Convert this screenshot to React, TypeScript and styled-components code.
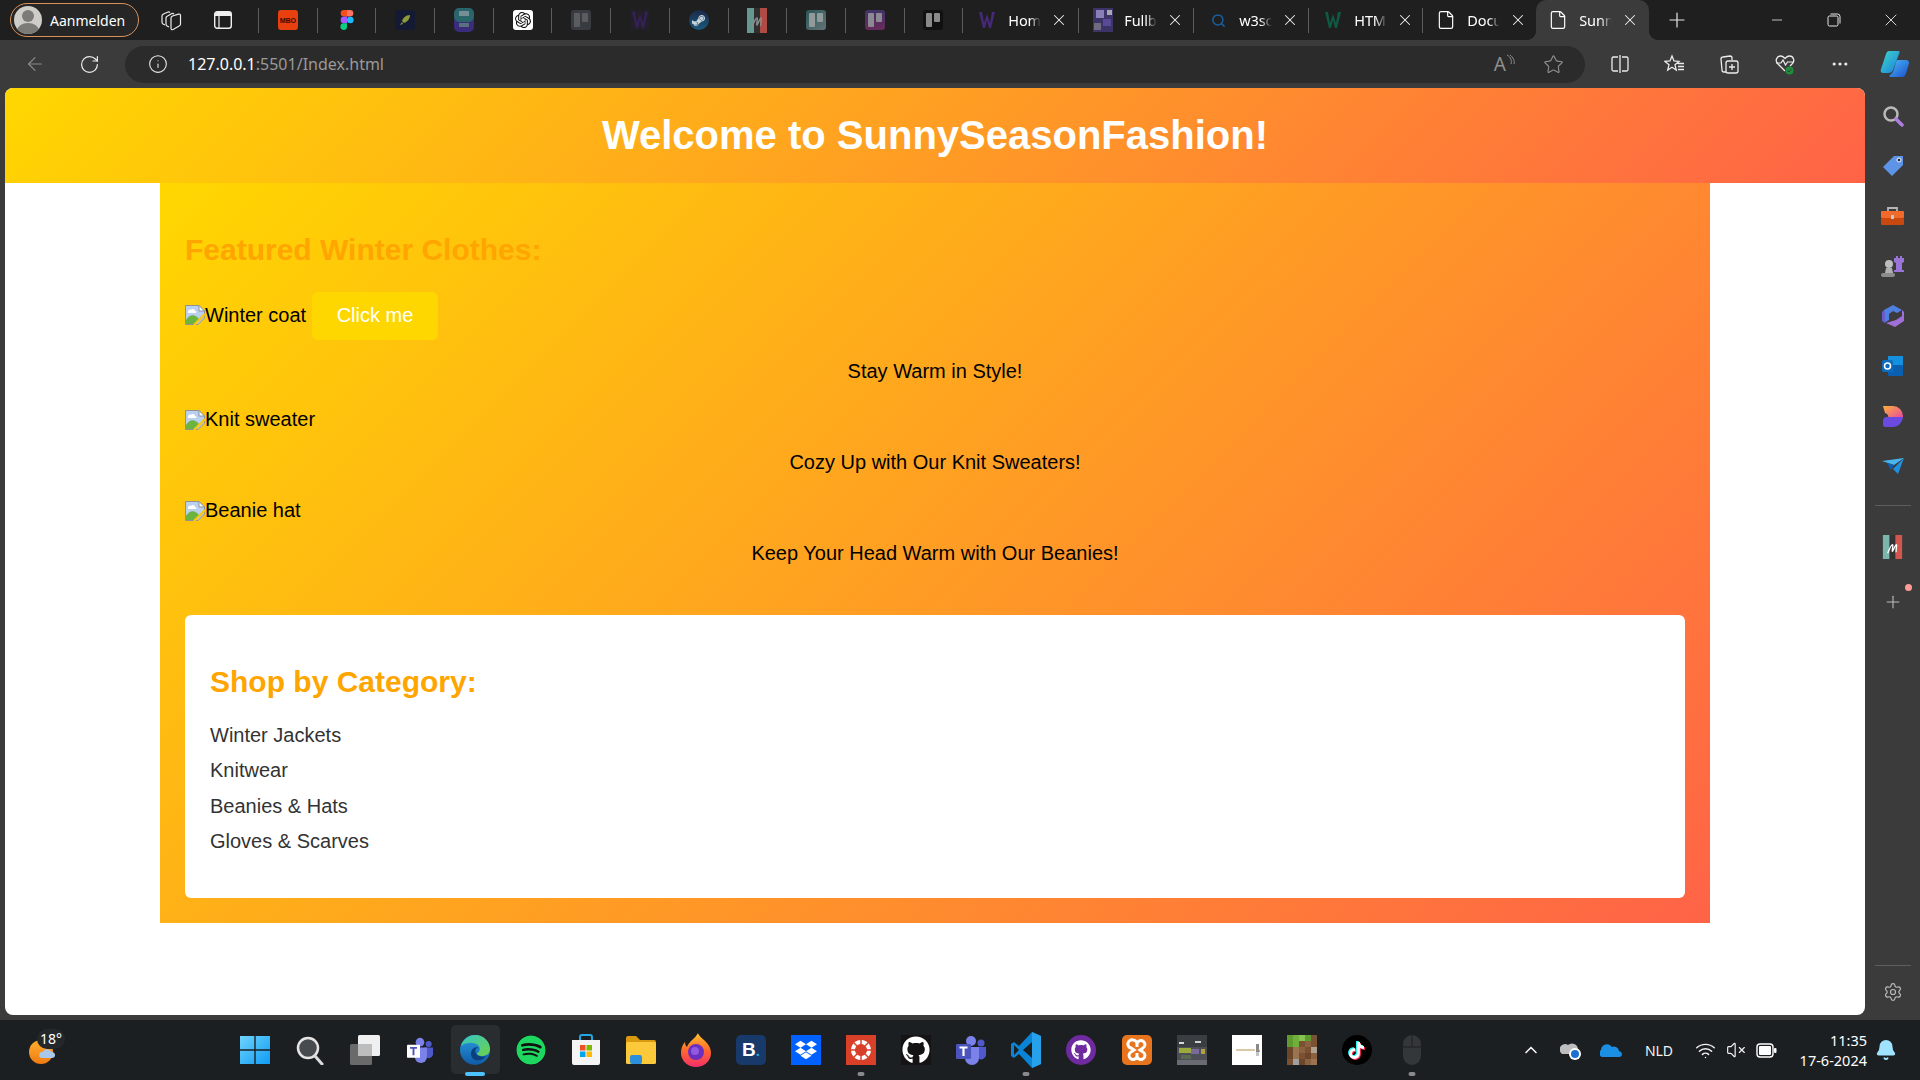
import React from "react";
import styled, { createGlobalStyle } from "styled-components";
import {
  ArrowLeft, RotateCw, Info, Star, X, Plus, Minus, Ellipsis, Settings, ChevronUp, VolumeX, Wifi, Bell, File, Search,
} from "lucide-react";
import { FaSteamSymbol, FaGithub, FaDropbox, FaSpotify, FaTiktok } from "react-icons/fa";
import { SiOpenai } from "react-icons/si";

const Global = createGlobalStyle`
  html, body { margin: 0; padding: 0; background: #1c1f22; }
  * { box-sizing: border-box; }
  body { font-family: "Liberation Sans", Arial, sans-serif; overflow: hidden; }
`;

const Shell = styled.div`
  width: 1920px; height: 1080px; display: flex; flex-direction: column; overflow: hidden; background: #3b3b3b;
`;

/* ---------- tab strip ---------- */
const TabStrip = styled.div`
  height: 40px; flex: none; display: flex; align-items: center; background: #1f1f1f; padding-left: 10px;
  color: #fff; font-family: "Noto Sans", sans-serif; font-size: 14.5px;
`;
const Profile = styled.div`
  width: 129px; height: 34px; flex: none; display: flex; align-items: center; gap: 8px; padding-left: 3px;
  border: 1px solid #d9915a; border-radius: 17px; background: #262626;
`;
const Avatar = styled.span`
  width: 28px; height: 28px; border-radius: 50%; background: #cfcdc8; overflow: hidden; display: block; flex: none;
`;
const Name = styled.span`font-size: 14px; color: #fff;`;
const StripSlot = styled.div<{ $w: number }>`
  width: ${p => p.$w}px; height: 40px; flex: none; display: flex; align-items: center; justify-content: center; color: #e8e8e8;
`;
const Sep = styled.div`
  width: 1px; height: 25px; flex: none; background: #5c5c5c;
`;
const PinnedTab = styled.div`
  width: 57.7px; height: 40px; flex: none; display: flex; align-items: center; justify-content: center;
`;
const Tab = styled.div<{ $w: number; $pad?: number; $active?: boolean }>`
  position: relative; width: ${p => p.$w}px; height: 40px; flex: none; display: flex; align-items: center; padding-left: ${p => p.$pad ?? 14}px;
  background: ${p => (p.$active ? "#3b3b3b" : "transparent")};
  border-radius: ${p => (p.$active ? "10px 10px 0 0" : "0")};
  ${p => p.$active && `
    &::before, &::after { content: ""; position: absolute; bottom: 0; width: 10px; height: 10px; }
    &::before { left: -10px; background: radial-gradient(circle at 0 0, transparent 10px, #3b3b3b 10.5px); }
    &::after { right: -10px; background: radial-gradient(circle at 100% 0, transparent 10px, #3b3b3b 10.5px); }
  `}
`;
const FaviconBox = styled.span`
  width: 20px; height: 24px; flex: none; display: flex; align-items: center; justify-content: center;
`;
const TabTitle = styled.span`
  width: 33px; margin-left: 11px; overflow: hidden; white-space: nowrap; flex: none; letter-spacing: -0.1px;
  -webkit-mask-image: linear-gradient(90deg, #000 65%, transparent 100%);
  mask-image: linear-gradient(90deg, #000 65%, transparent 100%);
`;
const TabClose = styled.span`
  display: flex; margin-left: 9px; color: #f0f0f0;
`;
const Spacer = styled.div`flex: 1;`;
const MiniMark = styled.span<{ $bg: string; $color?: string; $fade?: number; $round?: boolean }>`
  width: 20px; height: 20px; border-radius: ${p => (p.$round ? "50%" : "3px")}; display: flex; align-items: center; justify-content: center; flex: none;
  background: ${p => p.$bg}; color: ${p => p.$color || "#fff"}; opacity: ${p => p.$fade ?? 1}; overflow: hidden;
`;
const Dimmed = styled.span<{ $fade: number }>`
  display: flex; opacity: ${p => p.$fade};
`;
const MboText = styled.span`
  font: 700 7px "Liberation Sans", sans-serif; color: #3a0c00; letter-spacing: 0;
`;
const TrelloBars = styled.span<{ $c: string }>`
  display: flex; gap: 2px; align-items: flex-start;
  &::before, &::after { content: ""; width: 6px; background: ${p => p.$c}; border-radius: 1px; }
  &::before { height: 14px; }
  &::after { height: 9px; }
`;

/* ---------- toolbar ---------- */
const Toolbar = styled.div`
  height: 48px; flex: none; display: flex; align-items: center; background: #3b3b3b; padding-left: 8px; color: #e6e6e6;
`;
const ToolSlot = styled.div<{ $w?: number; $dim?: boolean }>`
  width: ${p => p.$w ?? 55}px; height: 38px; flex: none; display: flex; align-items: center; justify-content: center;
  color: ${p => (p.$dim ? "#8a8a8a" : "#ececec")};
`;
const AddressBar = styled.div`
  width: 1460px; height: 37px; flex: none; margin: 0 7px 0 8px; display: flex; align-items: center;
  background: #2b2b2b; border-radius: 19px; padding: 0 21px 0 23px;
  font-family: "Noto Sans", sans-serif; font-size: 16px;
`;
const UrlHost = styled.span`color: #fff; margin-left: 20px;`;
const UrlRest = styled.span`color: #9a9a9a;`;
const AddressIcons = styled.div`
  margin-left: auto; display: flex; align-items: center; gap: 28px; color: #8f8f8f;
`;
const ReadAloud = styled.span`
  font: 400 19px "Noto Sans", sans-serif; color: #8f8f8f; display: inline-flex; align-items: flex-start; line-height: 20px;
`;

/* ---------- main ---------- */
const Main = styled.div`
  flex: 1; min-height: 0; display: flex; background: #3b3b3b;
`;
const Page = styled.main`
  width: 1860px; margin: 0 0 5px 5px; background: #fff; border-radius: 8px; overflow: hidden; color: #000; font-size: 20px; line-height: 23px;
`;
const Hero = styled.header`
  height: 95px; padding-bottom: 1px; display: flex; align-items: center; justify-content: center;
  background: linear-gradient(135deg, #ffd700, #ff6347);
`;
const HeroTitle = styled.h1`
  margin: 0; color: #fff; font-size: 40px; line-height: 46px; font-weight: 700;
`;
const Container = styled.div`
  width: 1550px; margin: 0 auto; padding: 25px; background: linear-gradient(135deg, #ffd700, #ff6347);
`;
const SectionTitle = styled.h2`
  margin: 25px 0; font-size: 30px; line-height: 34px; font-weight: 700; color: #ffa500;
`;
const Product = styled.article`
  margin: 25px 0;
`;
const ProductLine = styled.div`
  display: flex; align-items: center; gap: 5.5px;
`;
const Missing = styled.span<{ $lift?: boolean }>`
  display: inline-flex; align-items: center; margin-bottom: ${p => (p.$lift ? 2 : 0)}px;
`;
const Cta = styled.button`
  height: 48px; padding: 0 25px 2px; border: 0; border-radius: 6px; background: #ffd700; color: #fff;
  font: 400 20px "Liberation Sans", Arial, sans-serif;
`;
const Caption = styled.p`
  margin: 20px 0; text-align: center;
`;
const Categories = styled.section`
  margin-top: 50px; padding: 25px; background: #fff; border-radius: 6px;
`;
const CategoryList = styled.ul`
  list-style: none; margin: -0.5px 0 19.5px; padding: 0; color: #333;
`;
const Category = styled.li`
  margin-bottom: 12.5px;
`;

/* ---------- sidebar ---------- */
const Sidebar = styled.aside`
  width: 55px; flex: none; display: flex; flex-direction: column; align-items: center; padding: 3px 0 3px; color: #bdbdbd;
`;
const SideSlot = styled.div<{ $h?: number }>`
  position: relative; width: 55px; height: ${p => p.$h ?? 50}px; flex: none; display: flex; align-items: center; justify-content: center;
`;
const SideRule = styled.div<{ $t: number; $b: number }>`
  width: 36px; height: 1px; flex: none; background: #5e5e5e; margin: ${p => p.$t}px 0 ${p => p.$b}px;
`;
const RedDot = styled.span`
  position: absolute; right: 8px; top: 12px; width: 7px; height: 7px; border-radius: 50%; background: #ff9c94;
`;

/* ---------- taskbar ---------- */
const Taskbar = styled.footer`
  height: 60px; flex: none; display: flex; align-items: center; background: #1c1f22; color: #fff;
  font-family: "Noto Sans", sans-serif;
`;
const WeatherArea = styled.div`
  width: 227.5px; height: 60px; flex: none; padding-left: 29px; display: flex; align-items: center;
`;
const WeatherIcon = styled.div`
  position: relative; width: 26px; height: 26px; margin-top: 3px;
`;
const TempBadge = styled.span`
  position: absolute; left: 8px; top: -10px; width: 28px; height: 20px; border-radius: 10px; background: #25282b;
  font-size: 14px; line-height: 19px; text-align: center; color: #fff;
`;
const TaskIcon = styled.div<{ $active?: boolean }>`
  position: relative; width: 55.1px; height: 60px; flex: none; display: flex; align-items: center; justify-content: center;
  ${p => p.$active && `
    &::before { content: ""; position: absolute; left: 3px; right: 3px; top: 5px; bottom: 6px; border-radius: 5px; background: #2a2d30; }
    & > * { position: relative; }
  `}
`;
const RunDot = styled.span<{ $wide?: boolean }>`
  position: absolute !important; bottom: 4px; left: 50%; transform: translateX(-50%); height: 4px; border-radius: 2px;
  width: ${p => (p.$wide ? 20 : 7)}px; background: ${p => (p.$wide ? "#4cc2ff" : "#8a8a8a")};
`;
const Tile = styled.span<{ $bg: string; $r?: number; $c?: string }>`
  width: 30px; height: 30px; border-radius: ${p => p.$r ?? 0}px; background: ${p => p.$bg}; color: ${p => p.$c || "#fff"};
  display: flex; align-items: center; justify-content: center; overflow: hidden;
`;
const BookingLetter = styled.span`
  font: 700 19px "Liberation Sans", sans-serif; color: #fff;
  & > i { color: #21a6d8; font-style: normal; font-size: 15px; }
`;
const Tray = styled.div`
  margin-left: auto; width: 409px; height: 60px; flex: none; display: flex; align-items: center;
`;
const TraySlot = styled.div<{ $w: number }>`
  width: ${p => p.$w}px; height: 60px; flex: none; display: flex; align-items: center; justify-content: center; color: #f2f2f2; font-size: 14px;
`;
const Clock = styled.div`
  width: 84px; flex: none; text-align: right; font-size: 14.5px; line-height: 20px; color: #fff; white-space: nowrap;
`;

/* ---------- drawings ---------- */
const BrokenImage = () => (
  <svg width="20" height="20" viewBox="0 0 20 20" style={{ flex: "none" }}>
    <path d="M.5.5h13.500l5.500 5.500v7L13 19.500H.5z" fill="#b9d0ee" stroke="#8f9296" />
    <path d="M14 .5v5.500h5.500z" fill="#fff" stroke="#8f9296" />
    <path d="M3 7c0-2 2-3 3-2 1-2 4-1 4 1 2 0 2 2 0 2H4c-1 0-1.500-.5-1-1z" fill="#fff" />
    <path d="M1 19v-4c3-5 7-6 11-3l2 2-5 5z" fill="#6cb33f" />
    <path d="M9 20L20 9" stroke="#f7c815" strokeWidth="2.400" />
  </svg>
);
const Figma = () => (
  <svg width="20" height="20" viewBox="0 0 14 20">
    <path d="M4 0h3v6.600H4a3.300 3.300 0 010-6.600z" fill="#f24e1e" />
    <path d="M7 0h3a3.300 3.300 0 010 6.600H7z" fill="#ff7262" />
    <path d="M4 6.600h3v6.700H4a3.300 3.300 0 010-6.700z" fill="#a259ff" />
    <circle cx="10.300" cy="10" r="3.300" fill="#1abcfe" />
    <path d="M4 13.300h3v3.400a3.300 3.300 0 11-3-3.400z" fill="#0acf83" />
  </svg>
);
const WLogo = ({ c = "#5b2d91" }: { c?: string }) => (
  <svg width="16" height="18" viewBox="0 0 16 18"><path d="M0 1h3l2 11 3-9 3 9 2-11h3l-4 16h-2L8 9l-2 8H4z" fill={c} /></svg>
);
const Rocket = () => (
  <svg width="14" height="14" viewBox="0 0 14 14"><path d="M12 2C8 2 5 5 4 8l2 2c3-1 6-4 6-8zM4 9l-2 3 3-1z" fill="#8f9a3a" /></svg>
);
const Tool = () => (
  <svg width="20" height="24" viewBox="0 0 20 24">
    <rect y="8" width="20" height="16" rx="5" fill="#45309a" />
    <rect width="20" height="14" rx="5" fill="#2e7d86" />
    <rect x="5" y="3" width="10" height="5" fill="#8fb7bd" />
    <rect x="5" y="15" width="10" height="4" fill="#6d8aa0" />
  </svg>
);
const MLogo = ({ w = 20, h = 25, line = "#a8a8a8" }: { w?: number; h?: number; line?: string }) => (
  <svg width={w} height={h} viewBox="0 0 20 25">
    <rect width="7" height="25" fill="#7ab5ae" /><rect x="7" width="6" height="25" fill="#333" /><rect x="13" width="7" height="25" fill="#d2564e" />
    <path d="M5 19c2-5 4-9 5-9s-1 8 0 7 3-7 4-7-1 7 0 8" fill="none" stroke={line} strokeWidth="1.400" />
  </svg>
);
const Thumb = () => (
  <svg width="20" height="24" viewBox="0 0 20 24">
    <rect width="20" height="24" fill="#3c3466" /><rect x="3" y="2" width="8" height="8" fill="#8b7fb8" /><rect x="10" y="11" width="8" height="7" fill="#5a4a96" /><rect x="1" y="15" width="7" height="7" fill="#6f6a80" /><rect x="14" y="2" width="5" height="5" fill="#a8a5b5" />
  </svg>
);
const WorkspacesIcon = () => (
  <svg width="21" height="21" viewBox="0 0 21 21" fill="none" stroke="#ececec" strokeWidth="1.200">
    <path d="M4 15L2 14c-.8-.4-1-1-1-2V6c0-1 .5-1.500 1.500-2L7 2c1-.4 1.500 0 2 .6" />
    <path d="M8 17l-2-1c-.8-.4-1-1-1-2V8c0-1 .5-1.500 1.500-2L11 3.500c1-.4 1.500 0 2 .6" />
    <path d="M10 8c0-1 .5-1.500 1.500-2l6-1.800c1.200-.3 2 .2 2 1.400V14c0 1-.4 1.600-1.400 2l-6 3.500c-1.300.6-2.100 0-2.100-1.300z" />
  </svg>
);
const PanelIcon = () => (
  <svg width="18" height="18" viewBox="0 0 18 18" fill="none">
    <rect x=".7" y=".7" width="16.600" height="16.600" rx="2.500" stroke="#f0f0f0" strokeWidth="1.400" />
    <path d="M1 3a2 2 0 012-2h12a2 2 0 012 2v2H1z" fill="#f0f0f0" />
    <path d="M5 5v12.500" stroke="#f0f0f0" strokeWidth="1.200" />
  </svg>
);
const RestoreIcon = () => (
  <svg width="14" height="14" viewBox="0 0 14 14" fill="none" stroke="#e8e8e8">
    <rect x="1" y="3" width="10" height="10" rx="1.500" /><path d="M3.500 1h7A2.500 2.500 0 0113 3.500v7" />
  </svg>
);
const SplitIcon = () => (
  <svg width="20" height="20" viewBox="0 0 20 20" fill="none" stroke="#ececec" strokeWidth="1.300">
    <path d="M8 3H3.500A1.500 1.500 0 002 4.500v11A1.500 1.500 0 003.500 17H8M12 3h4.500A1.500 1.500 0 0118 4.500v11a1.500 1.500 0 01-1.500 1.500H12M10 1v18" />
  </svg>
);
const FavList = () => (
  <svg width="21" height="20" viewBox="0 0 21 20" fill="none" stroke="#ececec" strokeWidth="1.300">
    <path d="M8 2l2 5 5 .4-4 3.400 1.300 5.200L8 13.200 3.700 16 5 10.800 1 7.400 6 7zM14 9.500h6M14 12.500h6M14 15.500h6" />
  </svg>
);
const Collections = () => (
  <svg width="21" height="21" viewBox="0 0 21 21" fill="none" stroke="#ececec" strokeWidth="1.300">
    <path d="M7 18H5a2 2 0 01-2-2L2 5a2 2 0 012-2l7-1a2 2 0 012 2v2" />
    <rect x="7" y="7" width="12" height="12" rx="2" /><path d="M13 10v6M10 13h6" />
  </svg>
);
const Health = () => (
  <svg width="22" height="22" viewBox="0 0 22 22" fill="none">
    <path d="M11 18L3.500 10.500C1 8 2.500 3 6.500 3 9 3 10 4.500 11 5.500 12 4.500 13 3 15.500 3 19.500 3 21 8 18.500 10.500L16 13" stroke="#ececec" strokeWidth="1.300" />
    <path d="M2 10h5l2-3 2.500 5 2-3h6" stroke="#ececec" strokeWidth="1.200" />
    <circle cx="15.500" cy="17.500" r="4" fill="#1f8f3c" /><path d="M13.500 17.500l1.500 1.500 2.500-3" stroke="#3b3b3b" strokeWidth="1" />
  </svg>
);
const Copilot = () => (
  <svg width="30" height="30" viewBox="0 0 30 30">
    <defs>
      <linearGradient id="cpa" x1="0" y1="0" x2="1" y2="1"><stop offset="0" stopColor="#3dd6c6" /><stop offset="1" stopColor="#1b7fe0" /></linearGradient>
      <linearGradient id="cpb" x1="0" y1="0" x2="1" y2="1"><stop offset="0" stopColor="#4ab9f5" /><stop offset="1" stopColor="#1c4fd0" /></linearGradient>
    </defs>
    <path d="M9 2h9c2 0 2 1 1 3l-6 16c-1 2-2 3-5 3H3c-2 0-3-2-2-4L6 5c.7-2 1.500-3 3-3z" fill="url(#cpa)" />
    <path d="M18 11h8c2 0 3.500 1.500 3 3.500l-3 10c-.8 2.500-2 3.500-4 3.500H11c-2 0-2-1-1-2 2-1 3-3 4-6l2-7c.4-1.500 1-2 2-2z" fill="url(#cpb)" />
  </svg>
);
const SideTag = () => (
  <svg width="24" height="24" viewBox="0 0 24 24"><path d="M13 2h9v9L11 22 2 13z" fill="#5e94e8" /><circle cx="18" cy="6" r="2" fill="#1f2a44" stroke="#fff" /></svg>
);
const SideSearch = () => (
  <svg width="22" height="22" viewBox="0 0 22 22" fill="none"><circle cx="9" cy="9" r="6.500" stroke="#b9b9b9" strokeWidth="2.500" /><path d="M14 14l6 6" stroke="#b07ee0" strokeWidth="3.500" strokeLinecap="round" /></svg>
);
const SideToolbox = () => (
  <svg width="23" height="20" viewBox="0 0 23 20"><path d="M7 6V2h9v4" fill="none" stroke="#b5b5b5" strokeWidth="1.800" /><rect y="5" width="23" height="7" rx="1" fill="#ef6a2b" /><rect y="12" width="23" height="7" rx="1" fill="#c8490f" /><rect x="10" y="9" width="3" height="4" fill="#c8c8c8" /></svg>
);
const SideChess = () => (
  <svg width="24" height="24" viewBox="0 0 24 24"><path d="M15 2h2v2h2V2h2v2h2v4l-2 1v7h2v2H13v-2h2V9l-2-1V4h2z" fill="#9a74d8" /><circle cx="8" cy="10" r="4" fill="#bdbdbd" /><path d="M5 14h6l1 5H4z" fill="#b0b0b0" /><rect y="19" width="14" height="4" rx="2" fill="#8c8c8c" /></svg>
);
const SideCopilot = () => (
  <svg width="22" height="23" viewBox="0 0 22 23"><path d="M11 0l9 5-5 3-4-2-4 3v6L2 18V5z" fill="#4f7fe0" /><path d="M20 5l2 2v9l-9 6-9-4 10-3 6-4z" fill="#a070d8" /><path d="M2 5L0 7v9l3 2V8z" fill="#6a5ad0" /></svg>
);
const SideOutlook = () => (
  <svg width="21" height="20" viewBox="0 0 21 20"><rect x="6" width="15" height="10" fill="#1490df" /><rect x="6" y="9" width="15" height="11" rx="1" fill="#0a5fb0" /><rect y="4" width="11" height="12" rx="1.500" fill="#0f6cbd" /><circle cx="5.500" cy="10" r="3" fill="none" stroke="#fff" strokeWidth="1.500" /></svg>
);
const SideDesigner = () => (
  <svg width="20" height="21" viewBox="0 0 20 21">
    <defs><linearGradient id="sd" x1="0" y1="0" x2="1" y2="1"><stop offset="0" stopColor="#ffb13a" /><stop offset="1" stopColor="#e43fa8" /></linearGradient></defs>
    <path d="M0 0h10a10 10 0 0110 10c0 2-1 3-2 4H4a4 4 0 00-2-7z" fill="url(#sd)" /><path d="M4 11h16c-1 6-5 10-10 10H2a2 2 0 01-2-2v-4a4 4 0 014-4z" fill="#6a4ae0" />
  </svg>
);
const SideSend = () => (
  <svg width="22" height="16" viewBox="0 0 22 16"><path d="M0 3l22-3-10 7z" fill="#49b5ef" /><path d="M22 0L16 16l-5-5z" fill="#1f8fe0" /><path d="M5 5l7 2-3 5z" fill="#0c5fb5" /></svg>
);
const WinLogo = () => (
  <svg width="30" height="30" viewBox="0 0 30 30">
    <defs><linearGradient id="wl" x1="0" y1="0" x2="1" y2="1"><stop offset="0" stopColor="#6ed4fb" /><stop offset="1" stopColor="#0f9bf5" /></linearGradient></defs>
    <path d="M0 1h14.300v13.300H0zM15.700 1H30v13.300H15.700zM0 15.700h14.300V29H0zM15.700 15.700H30V29H15.700z" fill="url(#wl)" />
  </svg>
);
const TaskSearch = () => (
  <svg width="28" height="30" viewBox="0 0 28 30" fill="none"><circle cx="12" cy="13" r="10" fill="#474b4f" stroke="#e4e4e4" strokeWidth="2.500" /><path d="M19 21l7 8" stroke="#dcdcdc" strokeWidth="3" strokeLinecap="round" /></svg>
);
const TaskView = () => (
  <svg width="30" height="30" viewBox="0 0 30 30"><rect x="8" y="0" width="22" height="21" rx="1.500" fill="#f0f0f0" /><rect x="0" y="9" width="22" height="21" rx="1.500" fill="#6a6a6a" /><rect x="8" y="9" width="14" height="12" fill="#bdbdbd" /></svg>
);
const Teams = ({ s = 30, light = false }: { s?: number; light?: boolean }) => (
  <svg width={s} height={s} viewBox="0 0 30 30">
    <circle cx="15" cy="6" r="5" fill="#7b83eb" /><circle cx="25" cy="8" r="3.500" fill="#5059c9" />
    <path d="M20 12h10v8a5 5 0 01-7 4z" fill="#5059c9" /><path d="M9 12h14v11a7 7 0 01-14 0z" fill="#7b83eb" />
    <rect x="0" y="9" width="15" height="15" rx="1" fill={light ? "#fff" : "#4b53bc"} />
    <path d="M3.500 12.500h8M7.500 12.500V21" stroke={light ? "#4b53bc" : "#fff"} strokeWidth="2.200" fill="none" />
  </svg>
);
const Edge = () => (
  <svg width="30" height="30" viewBox="0 0 30 30">
    <defs>
      <linearGradient id="eg" x1="0" y1="0" x2="1" y2="1"><stop offset="0" stopColor="#34c6c6" /><stop offset="1" stopColor="#6ed24a" /></linearGradient>
      <linearGradient id="eb" x1="0" y1="0" x2="0" y2="1"><stop offset="0" stopColor="#2a9fe0" /><stop offset="1" stopColor="#0f5aa5" /></linearGradient>
    </defs>
    <circle cx="15" cy="15" r="15" fill="url(#eb)" />
    <path d="M1 11C3 4 9 0 15 0c9 0 15 7 15 14 0 5-4 7-8 7-3 0-5-1-5-3 3-1 4-5 1-8-4-3-12-3-17 1z" fill="url(#eg)" />
    <path d="M11 19c0-6 5-8 8-6-5-1-5 6 0 8 2 1 5 1 7 0-3 6-15 6-15-2z" fill="#0b3f7d" />
  </svg>
);
const Store = () => (
  <svg width="30" height="32" viewBox="0 0 30 32">
    <path d="M9 7V3a2 2 0 012-2h8a2 2 0 012 2v4" fill="none" stroke="#22a7e0" strokeWidth="2" />
    <path d="M1 6h28v23a2 2 0 01-2 2H3a2 2 0 01-2-2z" fill="#f4f4f4" />
    <rect x="9" y="11" width="5.500" height="5.500" fill="#f25022" /><rect x="15.500" y="11" width="5.500" height="5.500" fill="#7fba00" /><rect x="9" y="17.500" width="5.500" height="5.500" fill="#00a4ef" /><rect x="15.500" y="17.500" width="5.500" height="5.500" fill="#ffb900" />
  </svg>
);
const Folder = () => (
  <svg width="30" height="28" viewBox="0 0 30 28"><path d="M0 2a2 2 0 012-2h8l4 4h14a2 2 0 012 2v4H0z" fill="#d99a10" /><rect y="6" width="30" height="22" rx="1.500" fill="#fbc93a" /><rect x="4" y="19" width="12" height="9" rx="2" fill="#2b8fdc" /></svg>
);
const Firefox = () => (
  <svg width="30" height="34" viewBox="0 0 30 34">
    <defs><linearGradient id="ff" x1="0" y1="0" x2="0" y2="1"><stop offset="0" stopColor="#ffc22e" /><stop offset=".5" stopColor="#ff6a2a" /><stop offset="1" stopColor="#f22e6b" /></linearGradient></defs>
    <path d="M17 0c1 5 13 9 13 20a15 14 0 01-30 0c0-4 1-8 4-11 0 3 1 4 2 5 2-6 8-8 11-14z" fill="url(#ff)" /><circle cx="15" cy="19" r="8" fill="#6b2fc0" /><circle cx="14" cy="18" r="4" fill="#9259e0" />
  </svg>
);
const CanvasMark = () => (
  <svg width="26" height="26" viewBox="0 0 26 26" fill="#fff">
    <path d="M13 3a10 10 0 1 0 .01 0zM13 7a6 6 0 1 1-.01 0z" fillRule="evenodd" />
    <g stroke="#d8402a" strokeWidth="1.500"><path d="M13 2v6M13 18v6M2 13h6M18 13h6M5 5l4 4M17 17l4 4M21 5l-4 4M9 17l-4 4" /></g>
  </svg>
);
const VsCode = () => (
  <svg width="30" height="36" viewBox="0 0 30 36">
    <path d="M21 0l9 4v28l-9 4L8 22l-5 4-3-2v-12l3-2 5 4z" fill="#0a84d6" /><path d="M21 0l9 4v28l-9 4z" fill="#27a2ea" /><path d="M21 10v16l-9-8z" fill="#1c1f22" /><path d="M3 13l5 5-5 5z" fill="#1c1f22" />
  </svg>
);
const Xampp = () => (
  <svg width="24" height="24" viewBox="0 0 24 24" fill="none" stroke="#fff" strokeWidth="3"><path d="M8 2a4 4 0 00-2 8l3 2-3 2a4 4 0 106 4v-3h0v3a4 4 0 106-4l-3-2 3-2a4 4 0 10-6-4v3V6a4 4 0 00-4-4z" /></svg>
);
const PhotoThumb = () => (
  <svg width="30" height="30" viewBox="0 0 30 30">
    <rect width="30" height="30" fill="#3a3d42" /><rect y="12" width="30" height="18" fill="#4d4f58" />
    <rect x="2" y="7" width="5" height="2" fill="#d8d8d8" /><rect x="18" y="6" width="6" height="2" fill="#cfcfcf" />
    <rect x="2" y="13" width="12" height="5" fill="#9aab3c" /><rect x="14" y="14" width="8" height="5" fill="#7a6a9a" /><rect x="24" y="14" width="4" height="5" fill="#b0a040" />
    <rect x="4" y="20" width="10" height="4" fill="#5a6a50" /><rect y="25" width="30" height="5" fill="#6a6a72" />
  </svg>
);
const WhiteThumb = () => (
  <svg width="30" height="30" viewBox="0 0 30 30">
    <rect width="30" height="30" fill="#fff" /><rect x="4" y="14" width="19" height="2" fill="#d9c9a8" /><path d="M24 9h3v5l1 3h-4z" fill="#8a8a8a" /><rect x="24" y="17" width="3" height="4" fill="#c4c4c4" />
  </svg>
);
const Mine = () => {
  const c = ["#5f9a30", "#6fb03a", "#86c250", "#5f9a30", "#7a5233", "#5f9a30", "#6fb03a", "#7a5233", "#8a6240", "#7a5233", "#6b4628", "#9a7350", "#8a6240", "#7a5233", "#b0a090", "#6b4628", "#9a7350", "#7a5233", "#6b4628", "#8a6240", "#7a5233", "#a0a0a0", "#6b4628", "#8a6240", "#9a7350"];
  return <svg width="30" height="30" viewBox="0 0 5 5" shapeRendering="crispEdges">{c.map((f, i) => <rect key={i} x={i % 5} y={Math.floor(i / 5)} width="1" height="1" fill={f} />)}</svg>;
};
const Mouse = () => (
  <svg width="18" height="30" viewBox="0 0 18 30" fill="#34373a"><rect width="18" height="30" rx="9" /><path d="M0 12h18M9 0v12" stroke="#1c1f22" strokeWidth="1" /></svg>
);
const TinyCloud = () => (
  <svg width="22" height="20" viewBox="0 0 22 20"><path d="M2 14a5 5 0 016-9 6 6 0 0110 4 4 4 0 011 5z" fill="#bdbdbd" /><circle cx="15" cy="14" r="6" fill="#fff" /><circle cx="15" cy="14" r="4" fill="#1a6fd0" /></svg>
);
const OneDrive = () => (
  <svg width="22" height="14" viewBox="0 0 22 14"><path d="M2 14a4 4 0 01-1-7 6 6 0 0111-3 5 5 0 017 4 3.500 3.500 0 013 3 3 3 0 01-3 3z" fill="#1a8fe3" /></svg>
);
const Battery = () => (
  <svg width="21" height="15" viewBox="0 0 21 15" fill="none"><rect x="1" y="1" width="16" height="13" rx="3" stroke="#fff" strokeWidth="1.400" /><rect x="3" y="3" width="12" height="9" rx="1" fill="#fff" /><rect x="18" y="5" width="2.500" height="5" rx="1" fill="#fff" /></svg>
);
const Sun = () => (
  <svg width="26" height="26" viewBox="0 0 26 26">
    <defs><linearGradient id="sn" x1="0" y1="0" x2="0" y2="1"><stop offset="0" stopColor="#ffb02e" /><stop offset="1" stopColor="#f07a12" /></linearGradient></defs>
    <circle cx="12" cy="13" r="12" fill="url(#sn)" /><path d="M13 19a3 3 0 01.5-6 5 5 0 019 0 3 3 0 011 6z" fill="#a9c7ea" />
  </svg>
);

const pinned: React.ReactNode[] = [
  <MiniMark $bg="#e8400f"><MboText>MBO</MboText></MiniMark>,
  <Figma />,
  <MiniMark $bg="#141a33"><Rocket /></MiniMark>,
  <Dimmed $fade={0.75}><Tool /></Dimmed>,
  <MiniMark $bg="#fff" $color="#111"><SiOpenai size={16} /></MiniMark>,
  <MiniMark $bg="#3f4248" $fade={0.8}><TrelloBars $c="#6a6c70" /></MiniMark>,
  <MiniMark $bg="#241f2c" $fade={0.7}><WLogo c="#3d2470" /></MiniMark>,
  <MiniMark $bg="linear-gradient(#1a2a48,#1b5a7c)" $color="#c8d4dc" $round><FaSteamSymbol size={15} /></MiniMark>,
  <Dimmed $fade={0.8}><MLogo /></Dimmed>,
  <MiniMark $bg="linear-gradient(135deg,#2f6a6a,#7a8f95)" $fade={0.75}><TrelloBars $c="#b8c2c4" /></MiniMark>,
  <MiniMark $bg="linear-gradient(#4a3a7a,#7a2d6a)" $fade={0.8}><TrelloBars $c="#a8a4b0" /></MiniMark>,
  <MiniMark $bg="#111"><TrelloBars $c="#8a8a8a" /></MiniMark>,
];

const tabs: { t: string; w: number; pad?: number; icon: React.ReactNode }[] = [
  { t: "Home", w: 115, icon: <WLogo c="#46297a" /> },
  { t: "Fullbright", w: 114, icon: <Thumb /> },
  { t: "w3schools", w: 114, icon: <Search size={15} color="#1a5f9e" strokeWidth={2.4} /> },
  { t: "HTML", w: 113, icon: <WLogo c="#0f5a43" /> },
  { t: "Document", w: 113, pad: 13, icon: <File size={20} strokeWidth={1.4} /> },
];

const products = [
  { alt: "Winter coat", cta: true, caption: "Stay Warm in Style!" },
  { alt: "Knit sweater", caption: "Cozy Up with Our Knit Sweaters!" },
  { alt: "Beanie hat", caption: "Keep Your Head Warm with Our Beanies!" },
];
const categories = ["Winter Jackets", "Knitwear", "Beanies & Hats", "Gloves & Scarves"];

const taskIcons: { el: React.ReactNode; active?: boolean; dot?: boolean }[] = [
  { el: <WinLogo /> },
  { el: <TaskSearch /> },
  { el: <TaskView /> },
  { el: <Teams s={26} light /> },
  { el: <Edge />, active: true },
  { el: <FaSpotify size={30} color="#1ed760" style={{ background: "#111", borderRadius: "50%" }} /> },
  { el: <Store /> },
  { el: <Folder /> },
  { el: <Firefox /> },
  { el: <Tile $bg="#173a6b" $r={5}><BookingLetter>B<i>.</i></BookingLetter></Tile> },
  { el: <Tile $bg="#0061fe"><FaDropbox size={22} /></Tile> },
  { el: <Tile $bg="#d8402a"><CanvasMark /></Tile>, dot: true },
  { el: <Tile $bg="#151313"><FaGithub size={28} /></Tile> },
  { el: <Teams /> },
  { el: <VsCode />, dot: true },
  { el: <Tile $bg="#6e2a9e" $r={15}><FaGithub size={20} /></Tile> },
  { el: <Tile $bg="#e8741e" $r={5}><Xampp /></Tile> },
  { el: <PhotoThumb /> },
  { el: <WhiteThumb /> },
  { el: <Mine /> },
  { el: <Tile $bg="#000" $r={15}><FaTiktok size={17} style={{ filter: "drop-shadow(-1px -1px 0 #25f4ee) drop-shadow(1px 1px 0 #fe2c55)" }} /></Tile> },
  { el: <Mouse />, dot: true },
];

export default function App() {
  return (
    <Shell>
      <Global />
      <TabStrip>
        <Profile>
          <Avatar>
            <svg width="28" height="28" viewBox="0 0 28 28"><circle cx="14" cy="10" r="6" fill="#7d7b78" /><ellipse cx="14" cy="25" rx="11" ry="8" fill="#7d7b78" /></svg>
          </Avatar>
          <Name>Aanmelden</Name>
        </Profile>
        <StripSlot $w={64}><WorkspacesIcon /></StripSlot>
        <StripSlot $w={40}><PanelIcon /></StripSlot>
        <StripSlot $w={15} />
        {pinned.map((el, i) => (
          <React.Fragment key={i}>
            <Sep />
            <PinnedTab>{el}</PinnedTab>
          </React.Fragment>
        ))}
        {tabs.map(t => (
          <React.Fragment key={t.t}>
            <Sep />
            <Tab $w={t.w} $pad={t.pad}>
              <FaviconBox>{t.icon}</FaviconBox>
              <TabTitle>{t.t}</TabTitle>
              <TabClose><X size={18} strokeWidth={1.4} /></TabClose>
            </Tab>
          </React.Fragment>
        ))}
        <Tab $w={113} $pad={12} $active>
          <FaviconBox><File size={20} strokeWidth={1.4} /></FaviconBox>
          <TabTitle>SunnySeason</TabTitle>
          <TabClose><X size={18} strokeWidth={1.4} /></TabClose>
        </Tab>
        <StripSlot $w={56}><Plus size={24} strokeWidth={1.2} /></StripSlot>
        <Spacer />
        <StripSlot $w={57}><Minus size={16} strokeWidth={1.2} /></StripSlot>
        <StripSlot $w={57}><RestoreIcon /></StripSlot>
        <StripSlot $w={58}><X size={20} strokeWidth={1.1} /></StripSlot>
      </TabStrip>

      <Toolbar>
        <ToolSlot $w={54} $dim><ArrowLeft size={22} strokeWidth={1.3} /></ToolSlot>
        <ToolSlot $w={55}><RotateCw size={21} strokeWidth={1.4} /></ToolSlot>
        <AddressBar>
          <Info size={20} strokeWidth={1.3} color="#ececec" />
          <UrlHost>127.0.0.1<UrlRest>:5501/Index.html</UrlRest></UrlHost>
          <AddressIcons>
            <ReadAloud>A<svg width="9" height="12" viewBox="0 0 9 12" fill="none" stroke="#8f8f8f"><path d="M1 1c4 2 5 6 4 9M4 1c3 2 5 6 4 9" /></svg></ReadAloud>
            <Star size={21} strokeWidth={1.3} />
          </AddressIcons>
        </AddressBar>
        <ToolSlot><SplitIcon /></ToolSlot>
        <ToolSlot><FavList /></ToolSlot>
        <ToolSlot><Collections /></ToolSlot>
        <ToolSlot><Health /></ToolSlot>
        <ToolSlot><Ellipsis size={20} strokeWidth={1.8} /></ToolSlot>
        <ToolSlot><Copilot /></ToolSlot>
      </Toolbar>

      <Main>
        <Page>
          <Hero><HeroTitle>Welcome to SunnySeasonFashion!</HeroTitle></Hero>
          <Container>
            <SectionTitle>Featured Winter Clothes:</SectionTitle>
            {products.map(p => (
              <Product key={p.alt}>
                <ProductLine>
                  <Missing $lift={p.cta}><BrokenImage />{p.alt}</Missing>
                  {p.cta && <Cta>Click me</Cta>}
                </ProductLine>
                <Caption>{p.caption}</Caption>
              </Product>
            ))}
            <Categories>
              <SectionTitle>Shop by Category:</SectionTitle>
              <CategoryList>
                {categories.map(c => <Category key={c}>{c}</Category>)}
              </CategoryList>
            </Categories>
          </Container>
        </Page>
        <Sidebar>
          <SideSlot><SideSearch /></SideSlot>
          <SideSlot><SideTag /></SideSlot>
          <SideSlot><SideToolbox /></SideSlot>
          <SideSlot><SideChess /></SideSlot>
          <SideSlot><SideCopilot /></SideSlot>
          <SideSlot><SideOutlook /></SideSlot>
          <SideSlot><SideDesigner /></SideSlot>
          <SideSlot><SideSend /></SideSlot>
          <SideRule $t={14} $b={16} />
          <SideSlot><MLogo w={25} h={24} line="#fff" /></SideSlot>
          <SideSlot $h={60}><Plus size={20} strokeWidth={1.3} /><RedDot /></SideSlot>
          <Spacer />
          <SideRule $t={0} $b={1} />
          <SideSlot><Settings size={20} strokeWidth={1.4} /></SideSlot>
        </Sidebar>
      </Main>

      <Taskbar>
        <WeatherArea>
          <WeatherIcon><Sun /><TempBadge>18°</TempBadge></WeatherIcon>
        </WeatherArea>
        {taskIcons.map((t, i) => (
          <TaskIcon key={i} $active={t.active}>
            {t.el}
            {t.active && <RunDot $wide />}
            {t.dot && <RunDot />}
          </TaskIcon>
        ))}
        <Tray>
          <TraySlot $w={40}><ChevronUp size={20} strokeWidth={2} /></TraySlot>
          <TraySlot $w={40}><TinyCloud /></TraySlot>
          <TraySlot $w={40}><OneDrive /></TraySlot>
          <TraySlot $w={56}>NLD</TraySlot>
          <TraySlot $w={36}><Wifi size={21} strokeWidth={1.7} /></TraySlot>
          <TraySlot $w={26}><VolumeX size={20} strokeWidth={1.4} /></TraySlot>
          <TraySlot $w={34}><Battery /></TraySlot>
          <Clock>11:35<br />17-6-2024</Clock>
          <TraySlot $w={38}><Bell size={22} fill="#9fe3ff" color="#9fe3ff" /></TraySlot>
        </Tray>
      </Taskbar>
    </Shell>
  );
}
